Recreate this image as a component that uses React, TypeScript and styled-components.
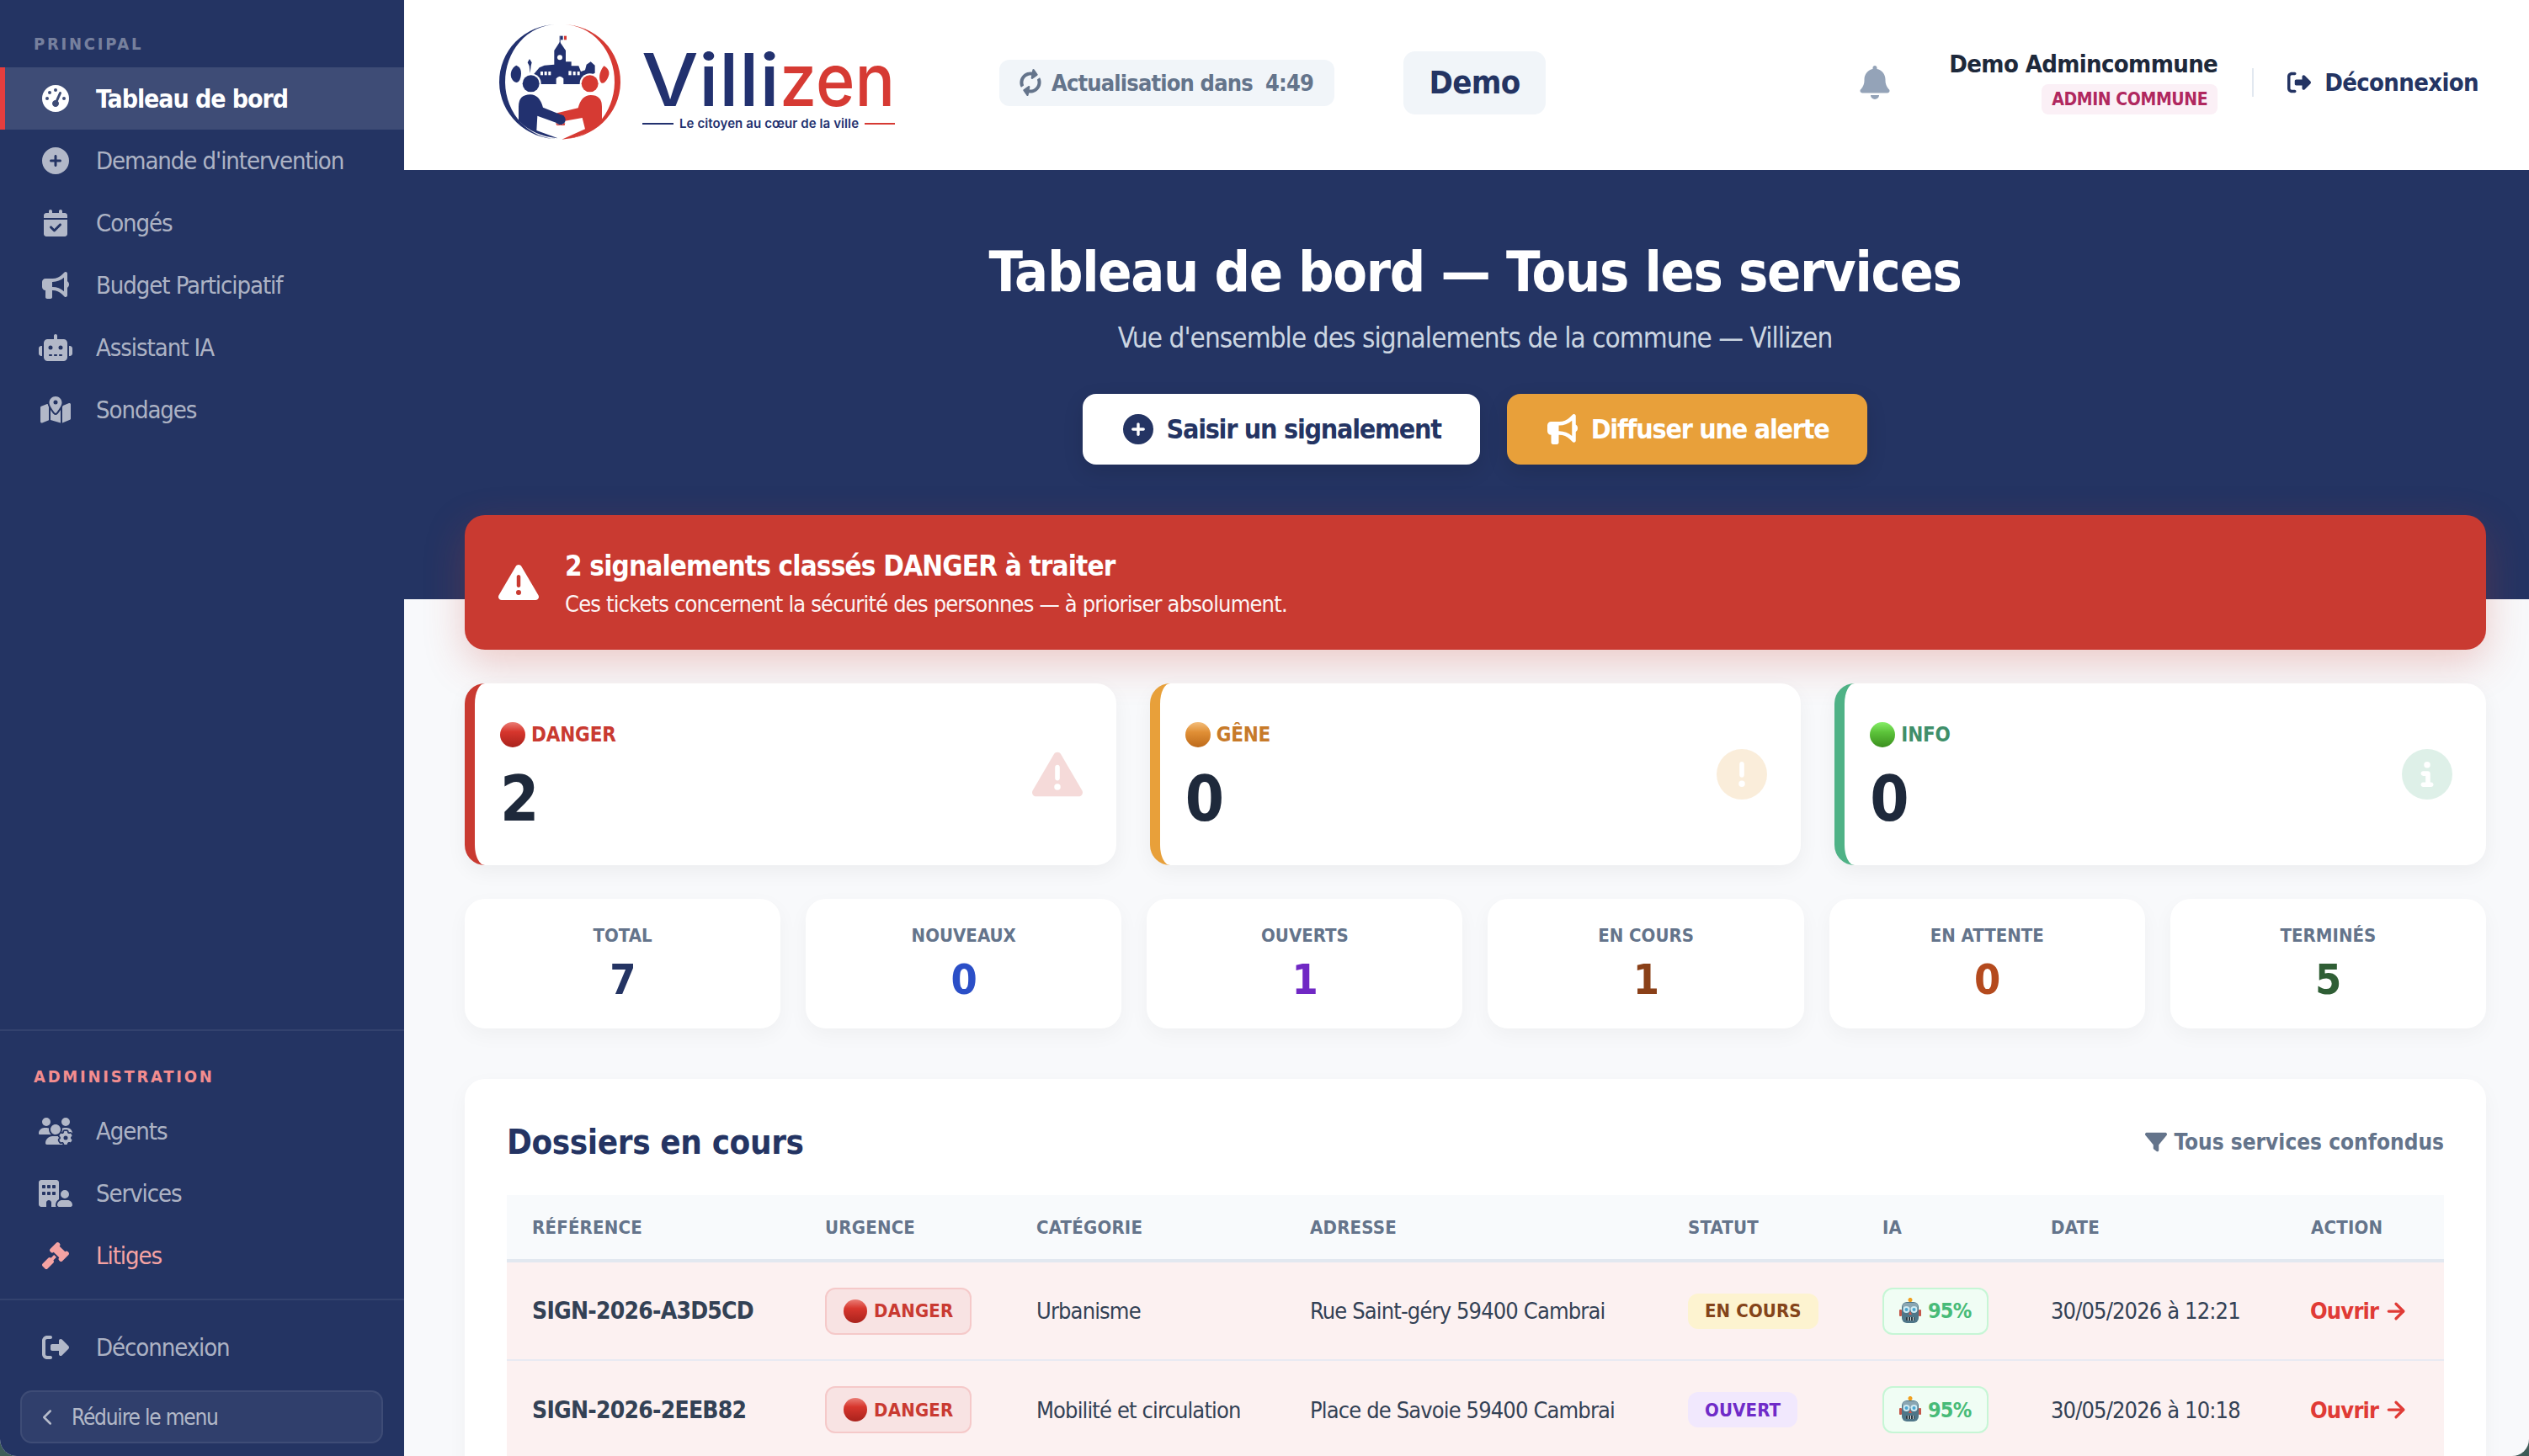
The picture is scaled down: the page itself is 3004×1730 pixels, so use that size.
import * as React from "react";
import styled, { createGlobalStyle } from "styled-components";
import {
  FaGaugeHigh,
  FaCirclePlus,
  FaCalendarCheck,
  FaBullhorn,
  FaRobot,
  FaMapLocationDot,
  FaUsersGear,
  FaBuildingUser,
  FaGavel,
  FaRightFromBracket,
  FaBell,
  FaTriangleExclamation,
  FaCircleExclamation,
  FaCircleInfo,
  FaFilter,
} from "react-icons/fa6";
import { FaSyncAlt } from "react-icons/fa";
import { ChevronLeft, ArrowRight } from "lucide-react";

const NAVY = "#243463";
const FONT = `"DejaVu Sans Condensed", "DejaVu Sans", "Liberation Sans", sans-serif`;

const GlobalStyle = createGlobalStyle`
  html, body {
    margin: 0;
    padding: 0;
    background: #3d5c58;
  }
  * { box-sizing: border-box; }
  body { font-family: ${FONT}; letter-spacing: -0.64px; }
`;

// ----------------------------------------------------------------------
// Layout
// ----------------------------------------------------------------------

const Shell = styled.div`
  display: flex;
  width: 3004px;
  height: 1730px;
  overflow: hidden;
  border-radius: 0 0 20px 20px;
  background: #f8f9fb;
`;

const Sidebar = styled.aside`
  width: 480px;
  flex: none;
  display: flex;
  flex-direction: column;
  background: ${NAVY};
`;

const Main = styled.main`
  flex: 1;
  min-width: 0;
  display: flex;
  flex-direction: column;
`;

// ----------------------------------------------------------------------
// Sidebar
// ----------------------------------------------------------------------

const SectionLabel = styled.div<{ $accent?: boolean }>`
  padding: 0 0 0 40px;
  height: 24px;
  line-height: 24px;
  font-size: 20px;
  font-weight: 700;
  letter-spacing: 2.75px;
  color: ${({ $accent }) => ($accent ? "#f38d8f" : "rgba(255,255,255,.4)")};
`;

const TopNav = styled.nav`
  padding-top: 40px;
  flex: 1;
  ${SectionLabel} { margin-bottom: 16px; }
`;

const AdminNav = styled.nav`
  padding-top: 42px;
  border-top: 2px solid rgba(255, 255, 255, 0.07);
  ${SectionLabel} { margin-bottom: 16px; padding-top: 0; }
`;

const FootNav = styled.div`
  margin-top: 14px;
  padding-top: 19px;
  border-top: 2px solid rgba(255, 255, 255, 0.07);
`;

const NavItem = styled.a<{ $active?: boolean; $danger?: boolean }>`
  display: flex;
  align-items: center;
  gap: 28px;
  height: 74px;
  padding-left: ${({ $active }) => ($active ? "40px" : "46px")};
  border-left: ${({ $active }) => ($active ? "6px solid #e53e3e" : "0")};
  background: ${({ $active }) => ($active ? "rgba(255,255,255,.12)" : "transparent")};
  color: ${({ $active, $danger }) =>
    $active ? "#fff" : $danger ? "#f5a3a3" : "rgba(255,255,255,.65)"};
  font-size: ${({ $active }) => ($active ? "30px" : "29px")};
  font-weight: ${({ $active }) => ($active ? 700 : 400)};
  letter-spacing: -1.06px;
`;

const NavIcon = styled.span`
  width: 40px;
  flex: none;
  display: flex;
  justify-content: center;
  align-items: center;
  svg { width: 40px; height: 32px; }
`;

const Collapse = styled.button`
  display: flex;
  align-items: center;
  gap: 14px;
  margin: 14px 25px 15px 24px;
  height: 63px;
  width: 431px;
  padding: 0 0 0 15px;
  border-radius: 14px;
  border: 2px solid rgba(255, 255, 255, 0.07);
  background: rgba(255, 255, 255, 0.06);
  color: rgba(255, 255, 255, 0.65);
  font-family: ${FONT};
  font-size: 26px;
  letter-spacing: -1.2px;
`;

// ----------------------------------------------------------------------
// Top bar
// ----------------------------------------------------------------------

const TopBar = styled.header`
  height: 202px;
  flex: none;
  display: flex;
  align-items: center;
  background: #fff;
  padding: 0 60px 6px 100px;
`;

const LogoSvg = styled.svg`
  width: 500px;
  height: 170px;
  flex: none;
  margin-top: 6px;
`;

const RefreshPill = styled.div`
  margin-left: 107px;
  width: 398px;
  height: 55px;
  display: flex;
  align-items: center;
  gap: 12px;
  padding-left: 24px;
  border-radius: 12px;
  background: #f1f5f9;
  color: #64748b;
  font-size: 27px;
  font-weight: 700;
  letter-spacing: -0.84px;
  white-space: pre;
  svg { width: 26px; height: 28px; transform: rotate(-35deg); }
`;

const TenantPill = styled.div`
  margin-left: 82px;
  width: 169px;
  height: 75px;
  display: flex;
  align-items: center;
  justify-content: center;
  border-radius: 14px;
  background: #f1f5f9;
  color: ${NAVY};
  font-size: 38px;
  font-weight: 700;
`;

const BellButton = styled.span`
  margin-left: auto;
  display: flex;
  color: #94a3b8;
  margin-right: 70px;
  svg { width: 36px; height: 40px; }
`;

const UserBlock = styled.div`
  display: flex;
  flex-direction: column;
  align-items: flex-end;
  gap: 4px;
  margin-bottom: 4px;
`;

const UserName = styled.div`
  font-size: 29px;
  line-height: 39px;
  font-weight: 700;
  letter-spacing: -0.64px;
  color: #1e293b;
`;

const RoleBadge = styled.span`
  height: 36px;
  padding: 0 12px;
  display: flex;
  align-items: center;
  border-radius: 8px;
  background: #fbf0f6;
  color: #b0285f;
  font-size: 21px;
  font-weight: 700;
  letter-spacing: -0.4px;
`;

const Divider = styled.span`
  width: 2px;
  height: 34px;
  margin: 0 40px 0 41px;
  background: #e2e8f0;
`;

const LogoutLink = styled.a`
  display: flex;
  align-items: center;
  gap: 16px;
  color: ${NAVY};
  font-size: 29px;
  font-weight: 700;
  svg { width: 28px; height: 28px; }
`;

// ----------------------------------------------------------------------
// Hero
// ----------------------------------------------------------------------

const Hero = styled.section`
  height: 510px;
  flex: none;
  padding: 82px 52px 0 72px;
  background: ${NAVY};
  text-align: center;
`;

const HeroTitle = styled.h1`
  margin: 0;
  font-size: 66px;
  line-height: 80px;
  font-weight: 700;
  letter-spacing: -1.27px;
  color: #fff;
`;

const HeroSub = styled.p`
  margin: 16px 0 0;
  font-size: 33px;
  line-height: 44px;
  letter-spacing: -0.94px;
  color: #cbd5e1;
`;

const HeroActions = styled.div`
  margin-top: 44px;
  display: flex;
  justify-content: center;
  gap: 32px;
`;

const HeroButton = styled.a<{ $primary?: boolean }>`
  height: 84px;
  padding: 0 46px 0 48px;
  display: flex;
  align-items: center;
  gap: 16px;
  border-radius: 16px;
  font-size: 32px;
  font-weight: 700;
  letter-spacing: -1.28px;
  background: ${({ $primary }) => ($primary ? "#fff" : "#e8a03a")};
  color: ${({ $primary }) => ($primary ? NAVY : "#fff")};
  box-shadow: 0 8px 24px rgba(0, 0, 0, 0.12);
  svg { width: 36px; height: 36px; }
`;

// ----------------------------------------------------------------------
// Content
// ----------------------------------------------------------------------

const Content = styled.div`
  padding: 0 51px 0 72px;
  margin-top: -100px;
  position: relative;
`;

const AlertBanner = styled.div`
  height: 160px;
  display: flex;
  align-items: center;
  gap: 31px;
  padding-left: 40px;
  border-radius: 24px;
  background: #c93a31;
  color: #fff;
  box-shadow: 0 16px 48px rgba(201, 58, 49, 0.25);
  svg { width: 48px; height: 48px; flex: none; }
`;

const AlertBody = styled.div`
  margin-top: 6px;
`;

const AlertTitle = styled.div`
  font-size: 33px;
  line-height: 42px;
  font-weight: 700;
  letter-spacing: -0.83px;
`;

const AlertText = styled.div`
  margin-top: 4px;
  font-size: 27px;
  line-height: 40px;
  letter-spacing: -0.82px;
  opacity: 0.95;
`;

const SeverityGrid = styled.div`
  margin-top: 40px;
  display: grid;
  grid-template-columns: repeat(3, 1fr);
  gap: 40px;
`;

const SeverityCard = styled.div<{ $color: string }>`
  height: 216px;
  display: flex;
  align-items: center;
  justify-content: space-between;
  padding: 0 40px 0 30px;
  border-radius: 24px;
  border-left: 12px solid ${({ $color }) => $color};
  background: #fff;
  box-shadow: 0 8px 24px rgba(0, 0, 0, 0.05);
`;

const SeverityBody = styled.div`
  margin-top: 8px;
`;

const SeverityLabel = styled.div<{ $color: string }>`
  display: flex;
  align-items: center;
  gap: 7px;
  font-size: 24px;
  line-height: 36px;
  font-weight: 700;
  letter-spacing: -0.2px;
  color: ${({ $color }) => $color};
`;

const SeverityValue = styled.div`
  margin-top: 14px;
  font-size: 74px;
  line-height: 88px;
  font-weight: 700;
  color: #1e293b;
`;

const SeverityIcon = styled.span<{ $color: string }>`
  display: flex;
  color: ${({ $color }) => $color};
  opacity: 0.18;
  svg { width: 60px; height: 60px; }
`;

const Dot = styled.span<{ $tone: "danger" | "warn" | "info"; $size?: number }>`
  width: ${({ $size }) => $size ?? 30}px;
  height: ${({ $size }) => $size ?? 30}px;
  flex: none;
  border-radius: 50%;
  background: ${({ $tone }) =>
    $tone === "danger"
      ? "linear-gradient(#ea7d75 0%, #d7362d 38%, #a9221c 100%)"
      : $tone === "warn"
        ? "linear-gradient(#f3bd7a 0%, #e08f35 40%, #bd6a1b 100%)"
        : "linear-gradient(#86ee68 0%, #5cc33a 40%, #3b8f1e 100%)"};
`;

const StatGrid = styled.div`
  margin-top: 40px;
  display: grid;
  grid-template-columns: repeat(6, 1fr);
  gap: 30px;
`;

const StatCard = styled.div`
  height: 154px;
  padding-top: 28px;
  text-align: center;
  border-radius: 24px;
  background: #fff;
  box-shadow: 0 8px 24px rgba(0, 0, 0, 0.04);
`;

const StatLabel = styled.div`
  font-size: 22px;
  line-height: 32px;
  font-weight: 700;
  letter-spacing: 0;
  color: #64748b;
`;

const StatValue = styled.div<{ $color: string }>`
  margin-top: 6px;
  font-size: 50px;
  line-height: 60px;
  font-weight: 700;
  color: ${({ $color }) => $color};
`;

const TableCard = styled.section`
  margin-top: 60px;
  padding: 50px 50px 40px;
  border-radius: 24px 24px 0 0;
  background: #fff;
  box-shadow: 0 8px 24px rgba(0, 0, 0, 0.04);
`;

const CardHead = styled.div`
  height: 50px;
  margin-bottom: 38px;
  display: flex;
  align-items: center;
  justify-content: space-between;
`;

const CardTitle = styled.h2`
  margin: 0;
  font-size: 40px;
  font-weight: 700;
  letter-spacing: -0.4px;
  color: ${NAVY};
`;

const FilterNote = styled.div`
  display: flex;
  align-items: center;
  gap: 8px;
  font-size: 26px;
  font-weight: 700;
  letter-spacing: 0;
  color: #64748b;
  svg { width: 26px; height: 26px; }
`;

const Table = styled.table`
  width: 100%;
  table-layout: fixed;
  border-collapse: collapse;
`;

const Col = styled.col<{ $w: number }>`
  width: ${({ $w }) => $w}px;
`;

const Th = styled.th`
  height: 78px;
  padding: 0 0 0 30px;
  text-align: left;
  font-size: 22px;
  font-weight: 700;
  letter-spacing: 0.2px;
  color: #64748b;
  background: #f8fafc;
  border-bottom: 4px solid #e2e8f0;
`;

const Row = styled.tr`
  background: #fcf1f1;
  border-bottom: 2px solid #e8eaf2;
`;

const Td = styled.td`
  height: 118px;
  padding: 0 0 0 30px;
  font-size: 27px;
  letter-spacing: -0.86px;
  color: #334155;
`;

const RefCell = styled(Td)`
  font-size: 28px;
  font-weight: 700;
  letter-spacing: -0.76px;
`;

const DangerPill = styled.span`
  display: inline-flex;
  align-items: center;
  gap: 8px;
  width: 174px;
  height: 56px;
  padding-left: 20px;
  vertical-align: middle;
  border-radius: 12px;
  border: 2px solid #f5c9c9;
  background: #f8e3e3;
  color: #c93a31;
  font-size: 22px;
  font-weight: 700;
  letter-spacing: 0.2px;
`;

const StatusPill = styled.span<{ $bg: string; $fg: string }>`
  display: inline-flex;
  align-items: center;
  height: 42px;
  padding: 0 20px;
  vertical-align: middle;
  border-radius: 12px;
  background: ${({ $bg }) => $bg};
  color: ${({ $fg }) => $fg};
  font-size: 22px;
  font-weight: 700;
  letter-spacing: 0.1px;
`;

const ScorePill = styled.span`
  display: inline-flex;
  align-items: center;
  gap: 8px;
  width: 126px;
  height: 56px;
  padding-left: 18px;
  vertical-align: middle;
  border-radius: 12px;
  border: 2px solid #c6f6d5;
  background: #f0fdf4;
  color: #48bb78;
  font-size: 25px;
  font-weight: 700;
  letter-spacing: -0.8px;
`;

const OpenLink = styled.a`
  display: inline-flex;
  align-items: center;
  gap: 6px;
  margin-left: -1px;
  color: #e03b36;
  font-size: 27px;
  font-weight: 700;
  letter-spacing: -0.8px;
`;

// ----------------------------------------------------------------------
// Drawings
// ----------------------------------------------------------------------

function Logo() {
  return (
    <LogoSvg viewBox="580 16 500 170">
      <path d="M661 29A69 68 0 0 0 663 165A62 68 0 0 1 661 29Z" fill="#22316f" />
      <path d="M669 29A69 68 0 0 1 667 165A62 68 0 0 0 669 29Z" fill="#d63a33" />
      <g transform="translate(580 15) scale(.3333)">
        <rect x="254" y="83" width="3" height="40" fill="#22316f" />
        <rect x="257" y="83" width="9" height="14" fill="#22316f" />
        <rect x="270" y="83" width="9" height="14" fill="#d63a33" />
        <path d="M255 104L276 135V175H296V190H322L330 210L345 205L350 185L365 175L380 188V215L345 232V255H165L160 222L182 196L200 188L235 185V135Z" fill="#22316f" />
        <circle cx="255" cy="160" r="9" fill="#fff" />
        <rect x="186" y="210" width="9" height="13" fill="#fff" />
        <rect x="200" y="210" width="9" height="13" fill="#fff" />
        <rect x="214" y="210" width="9" height="13" fill="#fff" />
        <rect x="286" y="208" width="10" height="15" fill="#fff" />
        <rect x="302" y="210" width="9" height="13" fill="#fff" />
        <rect x="317" y="210" width="9" height="13" fill="#fff" />
        <path d="M242 255V235Q255 220 268 235V255Z" fill="#fff" />
        <path d="M100 188C120 195 120 220 112 240C104 255 90 250 82 232C76 215 85 195 100 188Z" fill="#22316f" />
        <path d="M147 165L140 178L146 190L149 216L152 190L155 178Z" fill="#22316f" />
        <path d="M412 190C430 200 436 215 425 235C418 248 410 255 402 250C394 240 392 215 412 190Z" fill="#d63a33" />
        <circle cx="152" cy="253" r="36" fill="#fff" />
        <circle cx="362" cy="253" r="36" fill="#fff" />
        <circle cx="152" cy="253" r="30" fill="#22316f" />
        <circle cx="362" cy="253" r="30" fill="#d63a33" />
        <path d="M405 335Q405 294 365 294Q332 294 320 340L245 358L252 390L335 375L345 415L262 452Q350 446 405 385Z" fill="#d63a33" />
        <path d="M108 335Q108 292 150 292Q182 292 195 338L270 368L262 400L175 368L172 420L248 448Q160 440 108 385Z" fill="#22316f" />
        <circle cx="257" cy="382" r="18" fill="#22316f" />
        <path d="M240 392Q256 408 274 392L272 402H244Z" fill="#d63a33" />
      </g>
      <text x="762" y="126" fontFamily="Inter, sans-serif" fontSize="86" fontWeight="500" letterSpacing="0" fill="#22316f" textLength="164" lengthAdjust="spacingAndGlyphs">
        Villi
      </text>
      <text x="926" y="126" fontFamily="Inter, sans-serif" fontSize="86" fontWeight="500" letterSpacing="0" fill="#d63a33" textLength="137" lengthAdjust="spacingAndGlyphs">
        zen
      </text>
      <rect x="763" y="146" width="37" height="2" fill="#22316f" />
      <rect x="1027" y="146" width="36" height="2" fill="#d63a33" />
      <text x="807" y="152" fontFamily="Inter, sans-serif" fontSize="15" fontWeight="600" letterSpacing="0" fill="#22316f" textLength="213">
        Le citoyen au cœur de la ville
      </text>
    </LogoSvg>
  );
}

function RobotEmoji() {
  return (
    <svg width="26" height="32" viewBox="0 0 26 32">
      <rect x="12" y="0" width="2" height="5" fill="#e0a030" />
      <circle cx="13" cy="2.5" r="2.5" fill="#f0a020" />
      <rect x="3" y="5" width="20" height="25" rx="6" fill="#4f7688" />
      <rect x="4" y="6" width="18" height="8" rx="4" fill="#8aa6b2" />
      <rect x="0" y="14" width="3" height="8" rx="1" fill="#c4574a" />
      <rect x="23" y="14" width="3" height="8" rx="1" fill="#c4574a" />
      <circle cx="8.5" cy="14" r="4" fill="#cfeaf2" />
      <circle cx="17.5" cy="14" r="4" fill="#cfeaf2" />
      <circle cx="8.5" cy="14" r="2" fill="#4aa5cf" />
      <circle cx="17.5" cy="14" r="2" fill="#4aa5cf" />
      <path d="M13 16l2 4h-4z" fill="#d0564a" />
      <rect x="8" y="23" width="10" height="4" rx="1" fill="#2b3a42" />
      <rect x="10" y="23" width="1" height="4" fill="#d5dde0" />
      <rect x="13" y="23" width="1" height="4" fill="#d5dde0" />
      <rect x="16" y="23" width="1" height="4" fill="#d5dde0" />
    </svg>
  );
}

// ----------------------------------------------------------------------
// Data
// ----------------------------------------------------------------------

const PRIMARY_NAV = [
  { label: "Tableau de bord", icon: <FaGaugeHigh />, active: true },
  { label: "Demande d'intervention", icon: <FaCirclePlus /> },
  { label: "Congés", icon: <FaCalendarCheck /> },
  { label: "Budget Participatif", icon: <FaBullhorn /> },
  { label: "Assistant IA", icon: <FaRobot /> },
  { label: "Sondages", icon: <FaMapLocationDot /> },
];

const ADMIN_NAV = [
  { label: "Agents", icon: <FaUsersGear /> },
  { label: "Services", icon: <FaBuildingUser /> },
  { label: "Litiges", icon: <FaGavel />, danger: true },
];

const SEVERITIES = [
  { label: "DANGER", value: 2, tone: "danger", color: "#c93a31", bar: "#c93a31", icon: <FaTriangleExclamation /> },
  { label: "GÊNE", value: 0, tone: "warn", color: "#c77a2a", bar: "#e8a03a", icon: <FaCircleExclamation /> },
  { label: "INFO", value: 0, tone: "info", color: "#3f8f6a", bar: "#4fb286", icon: <FaCircleInfo /> },
] as const;

const STATS = [
  { label: "TOTAL", value: 7, color: "#243463" },
  { label: "NOUVEAUX", value: 0, color: "#2b4fc7" },
  { label: "OUVERTS", value: 1, color: "#7028c4" },
  { label: "EN COURS", value: 1, color: "#8a4018" },
  { label: "EN ATTENTE", value: 0, color: "#b44a1e" },
  { label: "TERMINÉS", value: 5, color: "#2f5e35" },
];

const COLUMNS = [
  { label: "RÉFÉRENCE", w: 348 },
  { label: "URGENCE", w: 251 },
  { label: "CATÉGORIE", w: 325 },
  { label: "ADRESSE", w: 449 },
  { label: "STATUT", w: 231 },
  { label: "IA", w: 200 },
  { label: "DATE", w: 309 },
  { label: "ACTION", w: 188 },
];

const TICKETS = [
  {
    ref: "SIGN-2026-A3D5CD",
    category: "Urbanisme",
    address: "Rue Saint-géry 59400 Cambrai",
    status: "EN COURS",
    statusBg: "#fdf3d0",
    statusFg: "#84441a",
    date: "30/05/2026 à 12:21",
  },
  {
    ref: "SIGN-2026-2EEB82",
    category: "Mobilité et circulation",
    address: "Place de Savoie 59400 Cambrai",
    status: "OUVERT",
    statusBg: "#f1e8fd",
    statusFg: "#6f2bc8",
    date: "30/05/2026 à 10:18",
  },
];

export default function App() {
  return (
    <>
      <GlobalStyle />
      <Shell>
        <Sidebar>
          <TopNav>
            <SectionLabel>PRINCIPAL</SectionLabel>
            {PRIMARY_NAV.map((item) => (
              <NavItem key={item.label} $active={item.active}>
                <NavIcon>{item.icon}</NavIcon>
                {item.label}
              </NavItem>
            ))}
          </TopNav>
          <AdminNav>
            <SectionLabel $accent>ADMINISTRATION</SectionLabel>
            {ADMIN_NAV.map((item) => (
              <NavItem key={item.label} $danger={item.danger}>
                <NavIcon>{item.icon}</NavIcon>
                {item.label}
              </NavItem>
            ))}
          </AdminNav>
          <FootNav>
            <NavItem>
              <NavIcon>
                <FaRightFromBracket />
              </NavIcon>
              Déconnexion
            </NavItem>
            <Collapse>
              <ChevronLeft size={30} strokeWidth={2} />
              Réduire le menu
            </Collapse>
          </FootNav>
        </Sidebar>

        <Main>
          <TopBar>
            <Logo />
            <RefreshPill>
              <FaSyncAlt />
              {"Actualisation dans  4:49"}
            </RefreshPill>
            <TenantPill>Demo</TenantPill>
            <BellButton>
              <FaBell />
            </BellButton>
            <UserBlock>
              <UserName>Demo Admincommune</UserName>
              <RoleBadge>ADMIN COMMUNE</RoleBadge>
            </UserBlock>
            <Divider />
            <LogoutLink>
              <FaRightFromBracket />
              Déconnexion
            </LogoutLink>
          </TopBar>

          <Hero>
            <HeroTitle>Tableau de bord — Tous les services</HeroTitle>
            <HeroSub>Vue d'ensemble des signalements de la commune — Villizen</HeroSub>
            <HeroActions>
              <HeroButton $primary>
                <FaCirclePlus />
                Saisir un signalement
              </HeroButton>
              <HeroButton>
                <FaBullhorn />
                Diffuser une alerte
              </HeroButton>
            </HeroActions>
          </Hero>

          <Content>
            <AlertBanner>
              <FaTriangleExclamation />
              <AlertBody>
                <AlertTitle>2 signalements classés DANGER à traiter</AlertTitle>
                <AlertText>Ces tickets concernent la sécurité des personnes — à prioriser absolument.</AlertText>
              </AlertBody>
            </AlertBanner>

            <SeverityGrid>
              {SEVERITIES.map((s) => (
                <SeverityCard key={s.label} $color={s.bar}>
                  <SeverityBody>
                    <SeverityLabel $color={s.color}>
                      <Dot $tone={s.tone} />
                      {s.label}
                    </SeverityLabel>
                    <SeverityValue>{s.value}</SeverityValue>
                  </SeverityBody>
                  <SeverityIcon $color={s.bar}>{s.icon}</SeverityIcon>
                </SeverityCard>
              ))}
            </SeverityGrid>

            <StatGrid>
              {STATS.map((s) => (
                <StatCard key={s.label}>
                  <StatLabel>{s.label}</StatLabel>
                  <StatValue $color={s.color}>{s.value}</StatValue>
                </StatCard>
              ))}
            </StatGrid>

            <TableCard>
              <CardHead>
                <CardTitle>Dossiers en cours</CardTitle>
                <FilterNote>
                  <FaFilter />
                  Tous services confondus
                </FilterNote>
              </CardHead>
              <Table>
                <colgroup>
                  {COLUMNS.map((c) => (
                    <Col key={c.label} $w={c.w} />
                  ))}
                </colgroup>
                <thead>
                  <tr>
                    {COLUMNS.map((c) => (
                      <Th key={c.label}>{c.label}</Th>
                    ))}
                  </tr>
                </thead>
                <tbody>
                  {TICKETS.map((t) => (
                    <Row key={t.ref}>
                      <RefCell>{t.ref}</RefCell>
                      <Td>
                        <DangerPill>
                          <Dot $tone="danger" $size={28} />
                          DANGER
                        </DangerPill>
                      </Td>
                      <Td>{t.category}</Td>
                      <Td>{t.address}</Td>
                      <Td>
                        <StatusPill $bg={t.statusBg} $fg={t.statusFg}>
                          {t.status}
                        </StatusPill>
                      </Td>
                      <Td>
                        <ScorePill>
                          <RobotEmoji />
                          95%
                        </ScorePill>
                      </Td>
                      <Td>{t.date}</Td>
                      <Td>
                        <OpenLink>
                          Ouvrir
                          <ArrowRight size={30} strokeWidth={2.6} />
                        </OpenLink>
                      </Td>
                    </Row>
                  ))}
                </tbody>
              </Table>
            </TableCard>
          </Content>
        </Main>
      </Shell>
    </>
  );
}
